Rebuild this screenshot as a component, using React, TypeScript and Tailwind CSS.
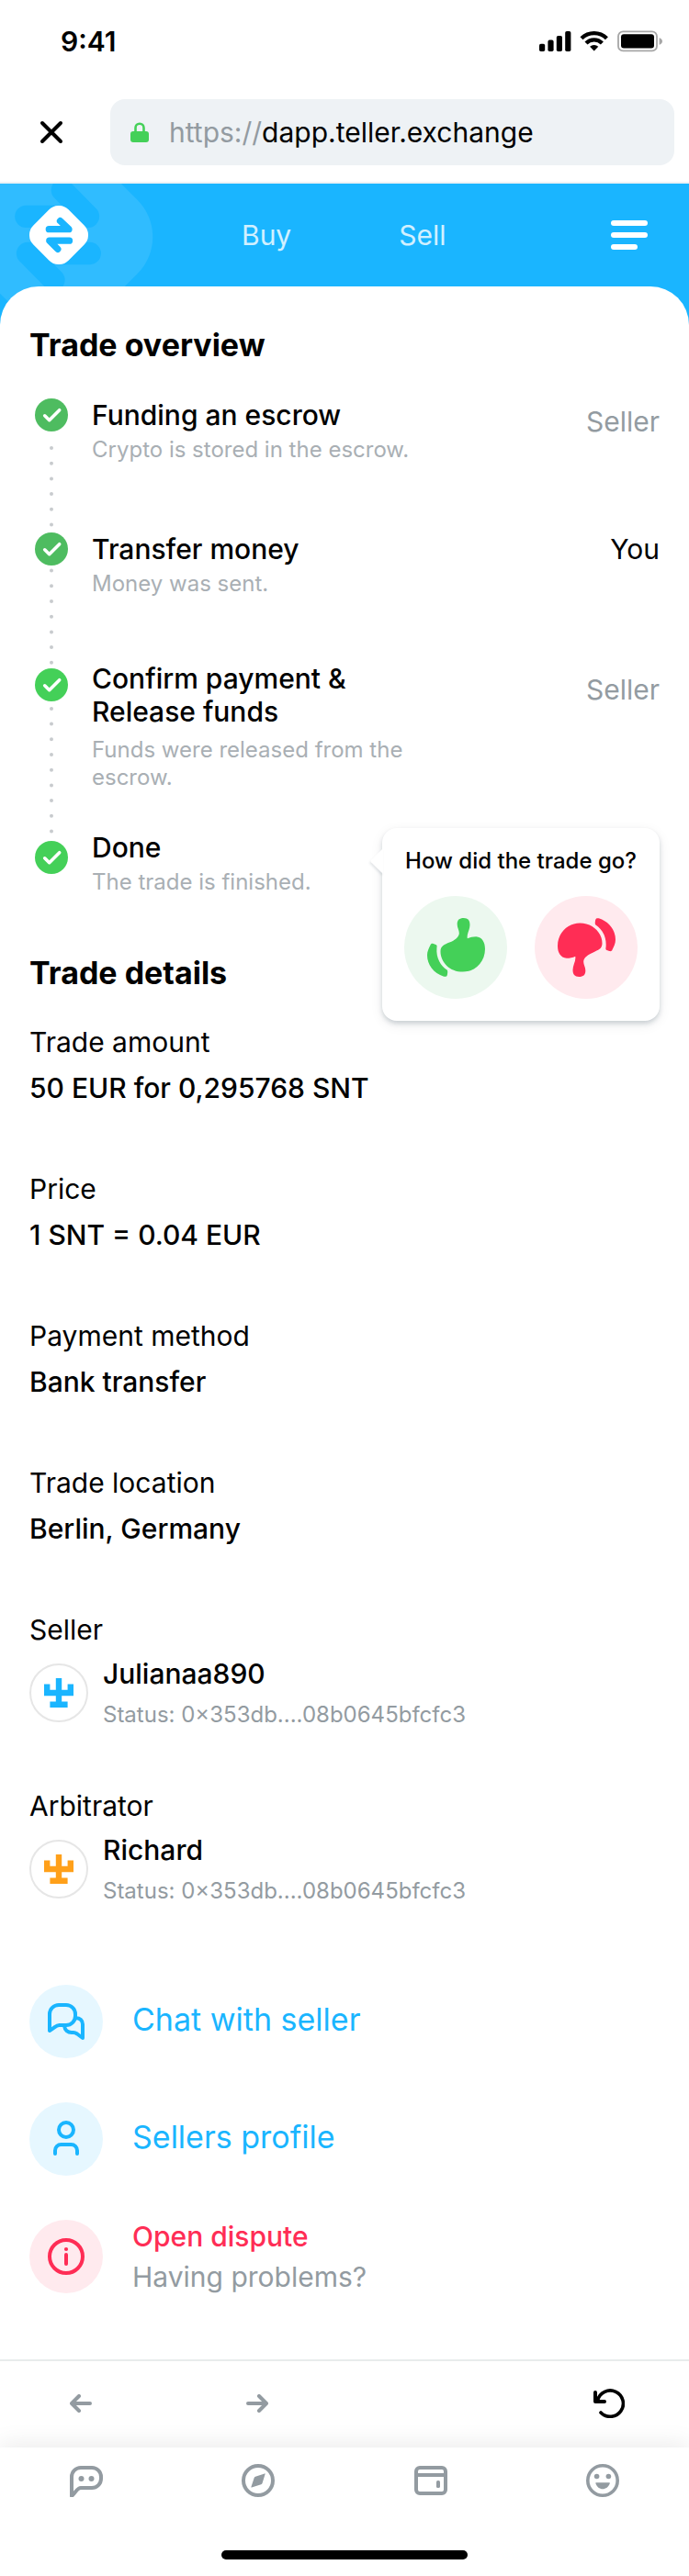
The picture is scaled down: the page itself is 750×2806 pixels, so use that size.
import React from "react";

type Step = {
  title: string;
  note: string;
  who?: string;
  active?: boolean;
  soft?: boolean;
  rowClass: string;
  iconClass: string;
  whoClass: string;
  noteClass: string;
};

const steps: Step[] = [
  {
    title: "Funding an escrow",
    note: "Crypto is stored in the escrow.",
    who: "Seller",
    soft: true,
    rowClass: "pb-[75px]",
    iconClass: "",
    whoClass: "mt-[7px]",
    noteClass: "mt-[5px]",
  },
  {
    title: "Transfer money",
    note: "Money was sent.",
    who: "You",
    active: true,
    soft: true,
    rowClass: "pb-[70px]",
    iconClass: "",
    whoClass: "",
    noteClass: "mt-[5px]",
  },
  {
    title: "Confirm payment & Release funds",
    note: "Funds were released from the escrow.",
    who: "Seller",
    rowClass: "pb-[43px]",
    iconClass: "mt-[7px]",
    whoClass: "mt-3",
    noteClass: "mt-[9px]",
  },
  {
    title: "Done",
    note: "The trade is finished.",
    rowClass: "",
    iconClass: "mt-[11px]",
    whoClass: "",
    noteClass: "mt-[5px]",
  },
];

const details = [
  { label: "Trade amount", value: "50 EUR for 0,295768 SNT" },
  { label: "Price", value: "1 SNT = 0.04 EUR" },
  { label: "Payment method", value: "Bank transfer" },
  { label: "Trade location", value: "Berlin, Germany" },
];

const people = [
  { role: "Seller", name: "Julianaa890", tint: "text-[#1ab5ff]" },
  { role: "Arbitrator", name: "Richard", tint: "text-[#ffa01a]" },
];

function StatusBar() {
  return (
    <div className="flex h-[90px] items-center justify-between pl-[66px] pr-[29px]">
      <span className="text-[30px] leading-9 font-semibold">9:41</span>
      <svg width="134" height="24" viewBox="0 0 134 24" aria-hidden="true">
        <rect x="0" y="14.7" width="6.2" height="8.3" rx="1.8" />
        <rect x="9.4" y="10.6" width="6.2" height="12.4" rx="1.8" />
        <rect x="18.8" y="6" width="6.2" height="17" rx="1.8" />
        <rect x="28.2" y="1" width="6.2" height="22" rx="1.8" />
        <g fill="none" stroke="#000" strokeWidth="4.3">
          <path d="M46 8.7a19.4 19.4 0 0 1 27.4 0" />
          <path d="M51 13.9a12.3 12.3 0 0 1 17.4 0" />
        </g>
        <path d="M59.7 22.5l-4.6-4.7a6.6 6.6 0 0 1 9.2 0z" />
        <rect x="86" y="1.4" width="42" height="21" rx="5.2" fill="none" stroke="#a6a6a6" strokeWidth="1.8" />
        <rect x="89" y="4.3" width="36" height="15.2" rx="3" />
        <path d="M130.6 8.2c2 .6 3.4 2 3.4 3.8s-1.4 3.2-3.4 3.8z" fill="#a6a6a6" />
      </svg>
    </div>
  );
}

function AddressBar() {
  return (
    <div className="flex items-center border-b-2 border-[#eef2f5] py-[18px] pr-4">
      <button type="button" aria-label="Close" className="flex h-[72px] w-[112px] items-center justify-center">
        <svg width="26" height="26" viewBox="0 0 26 26" fill="none" stroke="#000" strokeWidth="4" strokeLinecap="round">
          <path d="M3 3l20 20M23 3L3 23" />
        </svg>
      </button>
      <button
        type="button"
        className="ml-2 flex h-[72px] flex-1 items-center gap-[22px] rounded-2xl bg-[#eef2f5] pl-[22px] text-left text-[30px] leading-9"
      >
        <svg width="20" height="22" viewBox="0 0 20 22" aria-hidden="true">
          <path d="M5.500 11V6.200a4.500 4.500 0 0 1 9 0V11" fill="none" stroke="#44d058" strokeWidth="2.600" />
          <rect y="10" width="20" height="12" rx="3" fill="#44d058" />
        </svg>
        <span>
          <span className="text-[#939ba1]">https://</span>dapp.teller.exchange
        </span>
      </button>
    </div>
  );
}

function HeaderPattern() {
  return (
    <svg className="absolute top-0 left-0" width="200" height="160" viewBox="0 200 200 160" aria-hidden="true">
      <rect x="-25" y="169" width="178" height="178" rx="57" transform="rotate(45 64 258)" fill="#30bcff" />
      <g fill="none" stroke="#1ab5ff" strokeWidth="24.300" strokeLinecap="round" strokeLinejoin="round">
        <path d="M28.300 235.800H96L67.800 207" />
        <path d="M97.800 276H30l28.500 29" />
      </g>
    </svg>
  );
}

function SiteHeader() {
  return (
    <header className="relative flex h-28 items-center pr-[45px] pl-8">
      <a href="#home" aria-label="Teller home">
        <svg width="64" height="64" viewBox="32 224 64 64">
          <rect x="37" y="229" width="54" height="54" rx="14.900" transform="rotate(45 64 256)" fill="#fff" />
          <g fill="none" stroke="#1ab5ff" strokeWidth="7.300" strokeLinecap="round" strokeLinejoin="round">
            <path d="M53.300 249.700H75l-9.500-9" />
            <path d="M75.500 262.200H53.800l9 9.100" />
          </g>
        </svg>
      </a>
      <nav className="ml-[167px] flex gap-[117px] text-[30px] leading-9 text-white/80">
        <a href="#buy">Buy</a>
        <a href="#sell">Sell</a>
      </nav>
      <button type="button" aria-label="Menu" className="ml-auto flex w-10 flex-col gap-[7px]">
        <span className="h-1.5 w-10 rounded-sm bg-white" />
        <span className="h-1.5 w-10 rounded-sm bg-white" />
        <span className="h-1.5 w-[29px] rounded-sm bg-white" />
      </button>
    </header>
  );
}

function CheckMark({ soft, className }: { soft?: boolean; className: string }) {
  return (
    <svg className={`relative shrink-0 ${className}`} width="36" height="36" viewBox="0 0 36 36" aria-hidden="true">
      <circle cx="18" cy="18" r="18" fill={soft ? "#4ebc60" : "#44d058"} />
      <path d="M10.700 18.800l5 4.900 11-11" fill="none" stroke="#fff" strokeWidth="3.600" strokeLinecap="round" strokeLinejoin="round" />
    </svg>
  );
}

function ThumbShape() {
  return (
    <>
      <path d="M97 20C97 6 104 0 118 0c14 0 20 8 20 22 0 16-11 30-8 44 8-4 18-6 28-6 20 2 29 18 29 40 0 42-32 74-72 74-42 0-72-32-72-66 0-18 13-22 29-29 18-7 29-17 31-27 2-12-6-18-6-32z" />
      <path d="M10 88c2-6 6-6 10-5l8 3c4 2 4 5 3 10-3 34 13 59 33 72 2 2 2 4 2 8l-1 7c-1 6-5 7-11 6C20 178 0 150 0 120c0-12 5-22 10-32z" />
    </>
  );
}

function RatingPopup() {
  return (
    <div className="absolute -top-[3px] right-0 w-[302px] rounded-2xl bg-white px-6 pt-[22px] pb-6 shadow-[0_3px_5px_rgba(0,34,51,0.16),0_4px_14px_rgba(0,34,51,0.08)]">
      <svg className="absolute top-[22px] -left-[13px] drop-shadow-[-1px_2px_1px_rgba(0,34,51,0.1)]" width="14" height="28" viewBox="0 0 14 28" aria-hidden="true">
        <path d="M14 0v28L1 15.200q-1.200-1.200 0-2.400z" fill="#fff" />
      </svg>
      <p className="text-center text-[24px] leading-7 font-medium whitespace-nowrap">How did the trade go?</p>
      <div className="mt-6 flex justify-between">
        <button type="button" aria-label="Good" className="flex size-28 items-center justify-center rounded-full bg-[#ecf8ef]">
          <svg width="63" height="64" viewBox="0 0 187 190" fill="#44d058">
            <ThumbShape />
          </svg>
        </button>
        <button type="button" aria-label="Bad" className="flex size-28 items-center justify-center rounded-full bg-[#ffeaee]">
          <svg width="63" height="64" viewBox="0 0 187 190" fill="#ff2d55">
            <g transform="rotate(180 93.500 95)">
              <ThumbShape />
            </g>
          </svg>
        </button>
      </div>
    </div>
  );
}

function Overview() {
  return (
    <section>
      <h2 className="text-[34px] leading-11 font-bold">Trade overview</h2>
      <ol className="relative mt-9">
        <svg className="absolute top-0 left-[22px]" width="4" height="480" viewBox="0 0 4 480" aria-hidden="true">
          <path d="M2 54V475" stroke="#c8cbce" strokeWidth="4" strokeLinecap="round" strokeDasharray="0 16.700" />
        </svg>
        {steps.map((step, i) => (
          <li key={step.title} className={`relative flex items-start pl-1.5 ${step.rowClass}`}>
            <CheckMark soft={step.soft} className={step.iconClass} />
            <div className="ml-[26px] w-[360px]">
              <h3 className="max-w-[320px] text-[30px] leading-9 font-medium">{step.title}</h3>
              <p className={`text-[24px] leading-[30px] text-[#a9afb4] ${step.noteClass}`}>{step.note}</p>
            </div>
            {step.who && (
              <span className={`ml-auto text-[30px] leading-9 ${step.active ? "text-black" : "text-[#939ba1]"} ${step.whoClass}`}>
                {step.who}
              </span>
            )}
            {i === steps.length - 1 && <RatingPopup />}
          </li>
        ))}
      </ol>
    </section>
  );
}

function Avatar({ tint }: { tint: string }) {
  return (
    <span className={`flex size-16 shrink-0 items-center justify-center rounded-full border-2 border-[#e6e6e6] ${tint}`}>
      <svg width="32" height="32" viewBox="0 0 5 5" fill="currentColor" aria-hidden="true">
        <path d="M2 0h1v2h1V1h1v2H3v1h1v1H1V4h1V3H0V1h1v1h1z" />
      </svg>
    </span>
  );
}

function Details() {
  return (
    <section className="mt-[62px]">
      <h2 className="text-[34px] leading-11 font-bold">Trade details</h2>
      <dl className="mt-[35px] flex flex-col gap-[74px] text-[30px] leading-9">
        {details.map((d) => (
          <div key={d.label}>
            <dt>{d.label}</dt>
            <dd className="mt-3.5 font-medium">{d.value}</dd>
          </div>
        ))}
      </dl>
      <div className="mt-[74px] flex flex-col gap-[66px]">
        {people.map((p) => (
          <div key={p.role}>
            <h3 className="text-[30px] leading-9">{p.role}</h3>
            <div className="mt-3 flex items-center gap-4">
              <Avatar tint={p.tint} />
              <div>
                <p className="text-[30px] leading-9 font-medium">{p.name}</p>
                <p className="mt-3 text-[24px] leading-[30px] text-[#939ba1]">Status: 0×353db....08b0645bfcfc3</p>
              </div>
            </div>
          </div>
        ))}
      </div>
    </section>
  );
}

function Actions() {
  return (
    <section className="mt-[87px] flex flex-col gap-12">
      <a href="#chat" className="flex items-center gap-8 text-[34px] leading-11 text-[#1ab5ff]">
        <span className="flex size-20 items-center justify-center rounded-full bg-[#e6f7ff]">
          <svg width="40" height="40" viewBox="0 0 40 40" fill="none" stroke="currentColor" strokeWidth="4" strokeLinejoin="round">
            <path d="M2 30V12A10 10 0 0 1 12 2h8a10 10 0 0 1 10 10v2a10 10 0 0 1-10 10h-7.500C9 24 8 26.500 2 30z" />
            <path d="M30.500 16.200C35 16 38 19 38 23v15l-6-4.500c-1.500-1-2.500-1.500-4-1.500h-2c-4 0-7.500-2.500-8-7.500" />
          </svg>
        </span>
        <span className="pb-1">Chat with seller</span>
      </a>
      <a href="#profile" className="flex items-center gap-8 text-[34px] leading-11 text-[#1ab5ff]">
        <span className="flex size-20 items-center justify-center rounded-full bg-[#e6f7ff]">
          <svg width="40" height="40" viewBox="0 0 40 40" fill="none" stroke="currentColor" strokeWidth="4" strokeLinecap="round">
            <circle cx="20" cy="10" r="8" />
            <path d="M8 36v-3.500A6.500 6.500 0 0 1 14.500 26h11a6.500 6.500 0 0 1 6.500 6.500V36" />
          </svg>
        </span>
        <span className="pb-1">Sellers profile</span>
      </a>
      <a href="#dispute" className="flex items-center gap-8 text-[30px] leading-9">
        <span className="flex size-20 items-center justify-center rounded-full bg-[#ffeaee] text-[#ff2d55]">
          <svg width="40" height="40" viewBox="0 0 40 40" fill="none" stroke="currentColor" strokeWidth="4" strokeLinecap="round">
            <circle cx="20" cy="20" r="18" />
            <path d="M20 18v10" />
            <circle cx="20" cy="12" r="2.100" fill="currentColor" stroke="none" />
          </svg>
        </span>
        <span className="flex flex-col gap-2">
          <span className="font-medium text-[#ff2d55]">Open dispute</span>
          <span className="text-[#939ba1]">Having problems?</span>
        </span>
      </a>
    </section>
  );
}

function BrowserTools() {
  return (
    <div className="flex h-24 items-center border-t-2 border-[#e8ecec] pr-[65px] pb-0.5 pl-[66px]">
      <button type="button" aria-label="Back" className="flex size-11 items-center justify-center">
        <svg width="24" height="20" viewBox="0 0 24 20" fill="none" stroke="#939ba1" strokeWidth="4" strokeLinecap="round" strokeLinejoin="round">
          <path d="M22 10H2.500M10 2l-8 8 8 8" />
        </svg>
      </button>
      <button type="button" aria-label="Forward" className="ml-[148px] flex size-11 items-center justify-center">
        <svg width="24" height="20" viewBox="0 0 24 20" fill="none" stroke="#939ba1" strokeWidth="4" strokeLinecap="round" strokeLinejoin="round">
          <path d="M2 10h19.500M14 2l8 8-8 8" />
        </svg>
      </button>
      <button type="button" aria-label="Reload" className="ml-auto flex size-11 items-center justify-center">
        <svg width="34" height="32" viewBox="0 0 34 32" fill="none" stroke="#000" strokeWidth="4" strokeLinecap="round" strokeLinejoin="round">
          <path d="M2 4v10h10" />
          <path d="M4.500 12.500A14.200 14.200 0 1 1 8 26" strokeWidth="3.600" />
        </svg>
      </button>
    </div>
  );
}

function TabBar() {
  return (
    <footer className="relative bg-white pt-[18px] pb-[18px] shadow-[0_-4px_24px_rgba(0,0,0,0.08)]">
      <nav className="flex">
        <a href="#messages" aria-label="Messages" className="flex flex-1 justify-center">
          <svg width="36" height="36" viewBox="0 0 36 36" fill="none" stroke="#939ba1" strokeWidth="4" strokeLinejoin="round" strokeLinecap="round">
            <path d="M2 35V14A10 10 0 0 1 12 4h12a10 10 0 0 1 10 10v2a10 10 0 0 1-10 10H12C8 26 7 30.500 2 35z" />
            <g fill="#939ba1" stroke="none">
              <circle cx="12.500" cy="16" r="3" />
              <circle cx="23.500" cy="16" r="3" />
            </g>
          </svg>
        </a>
        <a href="#discover" aria-label="Discover" className="flex flex-1 justify-center">
          <svg width="36" height="36" viewBox="0 0 36 36">
            <circle cx="18" cy="18" r="16" fill="none" stroke="#939ba1" strokeWidth="4" />
            <path d="M15 13.700l10-3.300q.8-.2.6.6L22.500 21q-.3 1-1.300 1.300L11 25.500q-.8.200-.6-.6L13.700 15q.3-1 1.300-1.300z" fill="#939ba1" />
          </svg>
        </a>
        <a href="#wallet" aria-label="Wallet" className="flex flex-1 justify-center">
          <svg width="36" height="36" viewBox="0 0 36 36">
            <rect x="2" y="4" width="32" height="28" rx="4" fill="none" stroke="#939ba1" strokeWidth="4" />
            <path d="M2 12h32" stroke="#939ba1" strokeWidth="4" />
            <rect x="24" y="18" width="4" height="8" rx="1.600" fill="#939ba1" />
          </svg>
        </a>
        <a href="#me" aria-label="Profile" className="flex flex-1 justify-center">
          <svg width="36" height="36" viewBox="0 0 36 36" fill="#939ba1">
            <circle cx="18" cy="18" r="16.200" fill="none" stroke="#939ba1" strokeWidth="3.600" />
            <circle cx="11.600" cy="13.500" r="2.800" />
            <circle cx="24.400" cy="13.500" r="2.800" />
            <path d="M11 20.300h14.200q1 0 .6 1c-1.400 3.700-4.400 6-7.800 6s-6.200-2.300-7.600-6q-.4-1 .6-1z" />
          </svg>
        </a>
      </nav>
      <div className="mx-auto mt-[58px] h-2.5 w-[268px] rounded-full bg-black" />
    </footer>
  );
}

export default function App() {
  return (
    <div className="min-h-screen bg-white font-['Inter','Liberation_Sans',sans-serif] text-black">
      <StatusBar />
      <AddressBar />
      <div className="relative overflow-hidden bg-[#1ab5ff]">
        <HeaderPattern />
        <SiteHeader />
        <main className="relative rounded-t-[42px] bg-white px-8 pt-[42px] pb-[72px]">
          <Overview />
          <Details />
          <Actions />
        </main>
      </div>
      <BrowserTools />
      <TabBar />
    </div>
  );
}
